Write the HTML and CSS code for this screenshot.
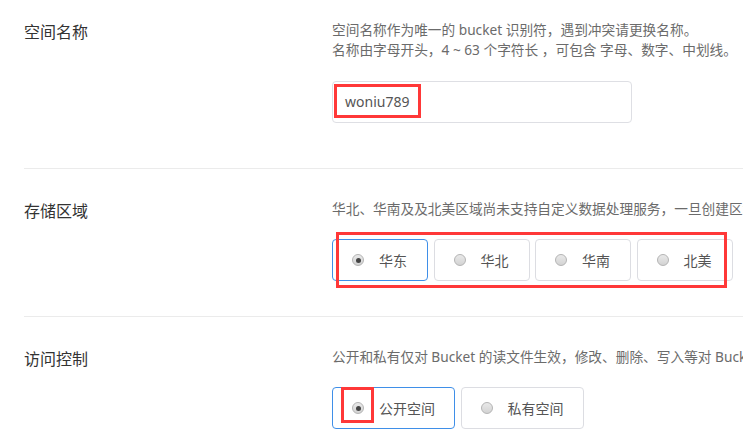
FILE: index.html
```html
<!DOCTYPE html>
<html lang="zh-CN">
<head>
<meta charset="utf-8">
<title>创建空间</title>
<link rel="stylesheet" href="styles.css">
</head>
<body>
<div class="page">
  <section class="row row-name">
    <div class="label">空间名称</div>
    <div class="content">
      <p class="desc">空间名称作为唯一的 bucket 识别符，遇到冲突请更换名称。<br>名称由字母开头，4 ~ 63 个字符长 ，可包含 字母、数字、中划线。</p>
      <div class="input-wrap">
        <div class="input">woniu789</div>
        <span class="mark mark-input"></span>
      </div>
    </div>
  </section>

  <section class="row row-region">
    <div class="label">存储区域</div>
    <div class="content">
      <p class="desc">华北、华南及及北美区域尚未支持自定义数据处理服务，一旦创建区域后不可修改。</p>
      <div class="options">
        <div class="opt opt-region checked"><span class="radio"></span><span class="opt-text">华东</span></div>
        <div class="opt opt-region"><span class="radio"></span><span class="opt-text">华北</span></div>
        <div class="opt opt-region"><span class="radio"></span><span class="opt-text">华南</span></div>
        <div class="opt opt-region"><span class="radio"></span><span class="opt-text">北美</span></div>
        <span class="mark mark-region"></span>
      </div>
    </div>
  </section>

  <section class="row row-access">
    <div class="label">访问控制</div>
    <div class="content">
      <p class="desc">公开和私有仅对 Bucket 的读文件生效，修改、删除、写入等对 Bucket 的操作均需要拥有者的授权。</p>
      <div class="options">
        <div class="opt checked"><span class="radio"></span><span class="opt-text">公开空间</span></div>
        <div class="opt"><span class="radio"></span><span class="opt-text">私有空间</span></div>
        <span class="mark mark-access"></span>
      </div>
    </div>
  </section>
</div>
</body>
</html>
```

FILE: styles.css
```css
html, body {
  margin: 0;
  padding: 0;
  background: #fff;
}
body {
  width: 743px;
  height: 445px;
  overflow: hidden;
  font-family: "Noto Sans", "Noto Sans CJK SC", sans-serif;
  color: #333;
}
.page {
  padding-left: 24px;
}
.row {
  display: grid;
  grid-template-columns: 308px 1fr;
  border-bottom: 1px solid #ebebeb;
  margin-right: -200px;
}
.row-name {
  padding-top: 20px;
  padding-bottom: 45px;
}
.row-region {
  padding-top: 30px;
  padding-bottom: 35px;
}
.row-access {
  padding-top: 30px;
  padding-bottom: 40px;
  border-bottom: none;
}
.label {
  font-size: 16px;
  line-height: 20px;
  padding-top: 2px;
  color: #333;
}
.content {
  min-width: 0;
}
.desc {
  margin: 0;
  font-size: 13.7px;
  line-height: 20px;
  color: #6b6b6b;
  white-space: nowrap;
}
.input-wrap {
  position: relative;
  margin-top: 21px;
  width: 300px;
}
.input {
  box-sizing: border-box;
  height: 42px;
  border: 1px solid #dedfe4;
  border-radius: 4px;
  padding: 0 12px;
  font-size: 14px;
  line-height: 40px;
  color: #555;
}
.options {
  position: relative;
  display: flex;
  gap: 5.5px;
  margin-top: 20px;
}
.opt {
  box-sizing: border-box;
  height: 42px;
  display: flex;
  align-items: center;
  padding: 0 19px;
  border: 1px solid #dcdde2;
  border-radius: 4px;
  font-size: 14px;
  color: #555;
  background: #fff;
}
.opt-region {
  width: 96px;
}
.opt.checked {
  border-color: #3f8fe8;
}
.radio {
  box-sizing: border-box;
  width: 12px;
  height: 12px;
  border-radius: 50%;
  border: 1px solid #b4b4b4;
  background: linear-gradient(#e9e9e9, #d3d3d3);
  margin-right: 15px;
  flex: none;
  position: relative;
}
.checked .radio::after {
  content: "";
  position: absolute;
  left: 2.5px;
  top: 2.5px;
  width: 5px;
  height: 5px;
  border-radius: 50%;
  background: #444;
}
.opt-text {
  white-space: nowrap;
  line-height: 20px;
  margin-top: 2px;
}
.mark {
  position: absolute;
  box-sizing: border-box;
  border: 3px solid #ff3838;
  pointer-events: none;
}
.mark-input {
  left: 2px;
  top: 3px;
  width: 87px;
  height: 34px;
}
.mark-region {
  left: 4px;
  top: -7px;
  width: 391px;
  height: 56px;
}
.mark-access {
  left: 9px;
  top: 0;
  width: 33px;
  height: 36px;
}
```
